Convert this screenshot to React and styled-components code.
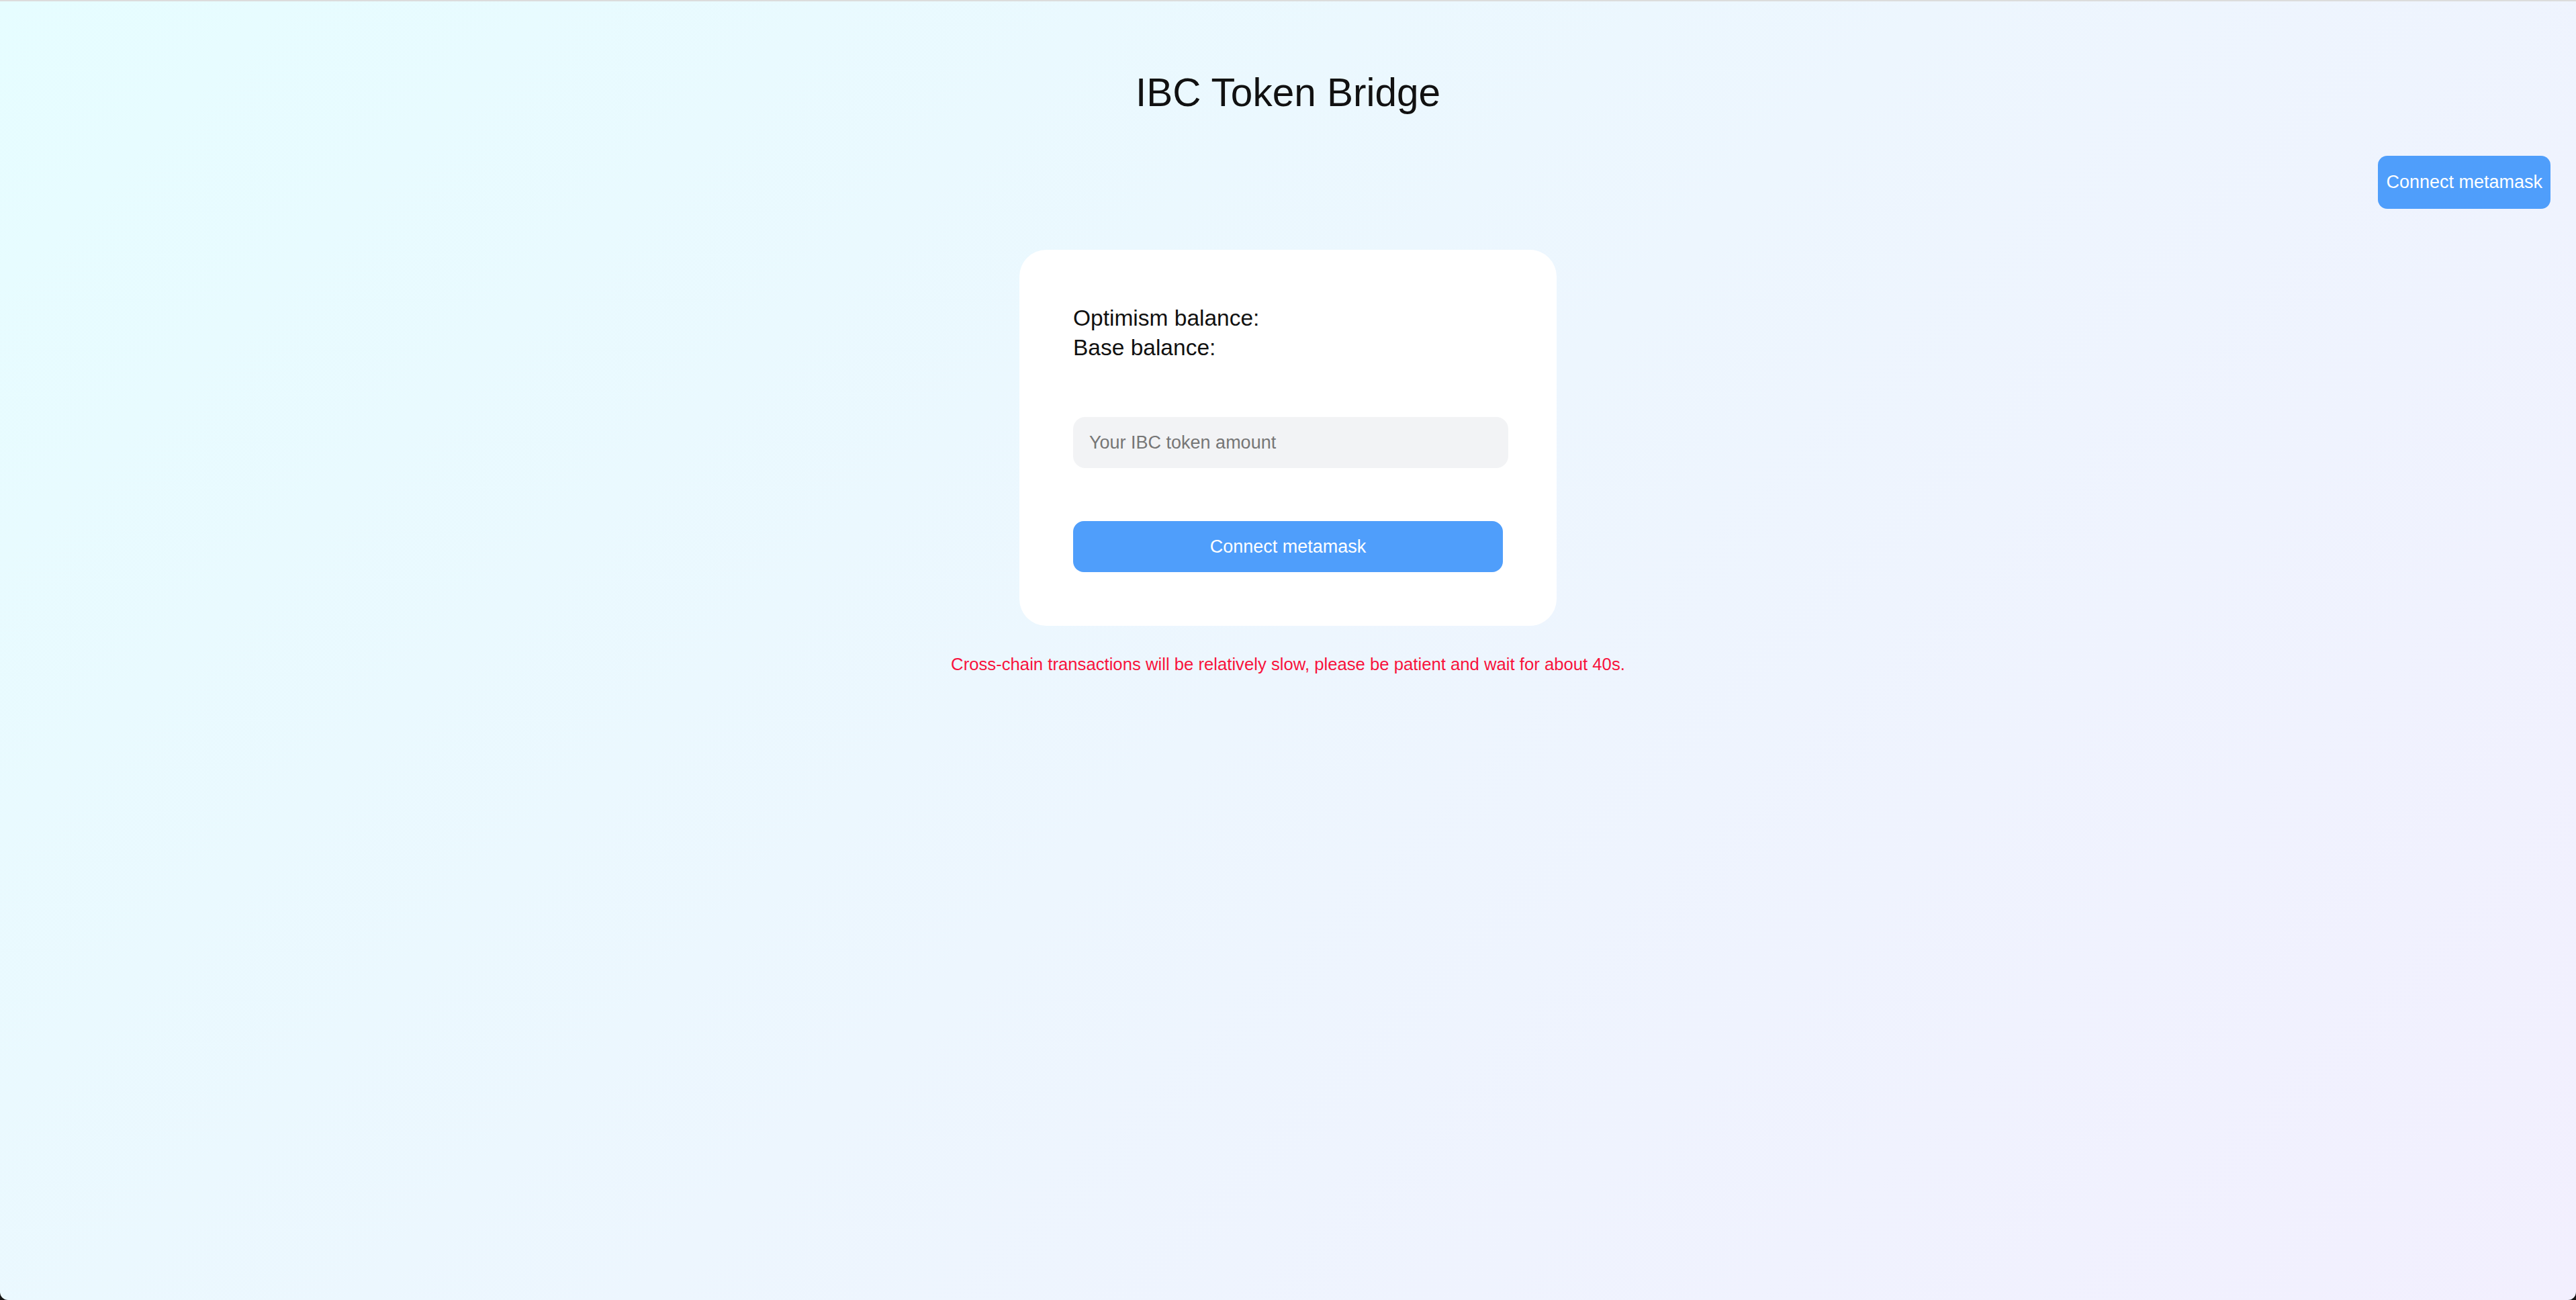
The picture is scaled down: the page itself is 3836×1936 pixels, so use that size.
import React from "react";
import styled, { createGlobalStyle } from "styled-components";

const GlobalStyle = createGlobalStyle`
  html, body {
    margin: 0;
    padding: 0;
    background: #141414;
  }
  * {
    box-sizing: border-box;
  }
`;

const Page = styled.div`
  height: 100vh;
  overflow: hidden;
  border-top: 2px solid #dcdcdc;
  border-radius: 0 0 12px 12px;
  background: linear-gradient(135deg, #e6fdff 0%, #edf6fe 50%, #f2effe 100%);
  font-family: "Liberation Sans", Arial, sans-serif;
  color: #111;
  display: flex;
  flex-direction: column;
  align-items: center;
`;

const Title = styled.h1`
  margin: 103px 0 0;
  font-size: 58.5px;
  font-weight: 400;
  line-height: 66px;
  color: #111;
`;

const TopBar = styled.div`
  align-self: stretch;
  display: flex;
  justify-content: flex-end;
  padding-right: 38px;
  margin-top: 61px;
`;

const Button = styled.button`
  border: none;
  cursor: pointer;
  background: #4f9efb;
  color: #fff;
  font-family: "Liberation Sans", Arial, sans-serif;
  font-size: 27px;
  height: ${(p) => (p.$wide ? "76px" : "79px")};
  width: ${(p) => (p.$wide ? "100%" : "auto")};
  padding: 0 12px;
  border-radius: ${(p) => (p.$wide ? "16px" : "14px")};
`;

const Card = styled.div`
  width: 800px;
  margin-top: 61px;
  background: #fff;
  border-radius: 40px;
  padding: 80px;
  display: flex;
  flex-direction: column;
`;

const Balances = styled.div`
  font-size: 33.5px;
  line-height: 44px;
  color: #111;
`;

const AmountInput = styled.input`
  margin-top: 81px;
  width: 648px;
  height: 76px;
  border: none;
  outline: none;
  border-radius: 18px;
  background: #f2f3f5;
  padding: 0 24px;
  font-family: "Liberation Sans", Arial, sans-serif;
  font-size: 27px;
  color: #111;

  &::placeholder {
    color: #767676;
  }
`;

const Actions = styled.div`
  margin-top: 79px;
  display: flex;
`;

const Notice = styled.p`
  margin: 43px 0 0;
  font-size: 25.7px;
  line-height: 28px;
  color: #f8123c;
`;

function App() {
  return (
    <>
      <GlobalStyle />
      <Page>
        <Title>IBC Token Bridge</Title>
        <TopBar>
          <Button>Connect metamask</Button>
        </TopBar>
        <Card>
          <Balances>
            <div>Optimism balance:</div>
            <div>Base balance:</div>
          </Balances>
          <AmountInput placeholder="Your IBC token amount" />
          <Actions>
            <Button $wide>Connect metamask</Button>
          </Actions>
        </Card>
        <Notice>
          Cross-chain transactions will be relatively slow, please be patient
          and wait for about 40s.
        </Notice>
      </Page>
    </>
  );
}

export default App;
